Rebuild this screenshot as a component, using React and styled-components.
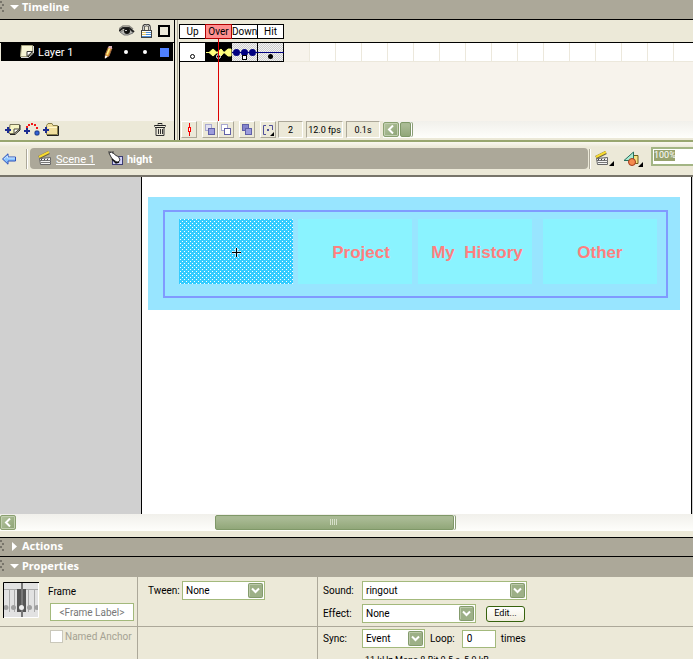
import styled, { createGlobalStyle } from "styled-components"

const GlobalStyle = createGlobalStyle`
  * {
    box-sizing: border-box;
  }

  body {
    margin: 0;
    overflow: hidden;
    background: #ece9d8;
    color: #000;
    font-family: Roboto, "Liberation Sans", sans-serif;
    font-size: 10px;
    line-height: 12px;
  }

  button, input, select {
    font: inherit;
    color: inherit;
    margin: 0;
    padding: 0;
    border-radius: 0;
  }

  svg {
    display: block;
    flex: none;
  }
`

const Page = styled.div`
  display: flex;
  flex-direction: column;
  height: 100vh;
`

/* Panel title bars */

const TitleBar = styled.header`
  display: flex;
  align-items: center;
  flex: none;
  height: ${({ $height }) => $height}px;
  padding-bottom: ${({ $raised }) => ($raised ? 5 : 2)}px;
  background: #aca899;
  border-top: ${({ $ruled }) => ($ruled ? "1px solid #000" : "none")};
  color: #fff;

  h2 {
    margin: 0 0 0 3px;
    font-family: "Noto Sans", sans-serif;
    font-size: 11px;
    font-weight: 700;
    line-height: 14px;
  }
`

const Triangle = ({ open }) => (
  <svg width="19" height="14" viewBox="0 0 19 14">
    <g fill="#77746a">
      <rect x="0" y="1" width="2" height="2" />
      <rect x="2" y="4" width="2" height="2" />
      <rect x="0" y="7" width="2" height="2" />
      <rect x="2" y="10" width="2" height="2" />
    </g>
    <path d={open ? "M10 5h9l-4.500 4.500z" : "M12 3v9l5-4.500z"} fill="#fff" />
  </svg>
)

const PanelTitle = ({ title, open, ...bar }) => (
  <TitleBar {...bar}>
    <Triangle open={open} />
    <h2>{title}</h2>
  </TitleBar>
)

/* Timeline */

const Timeline = styled.section`
  display: grid;
  grid-template-columns: 175px 1fr;
  column-gap: 4px;
  flex: none;
  height: 121px;
  border-top: 1px solid #000;
  background: linear-gradient(90deg, transparent 177px, #aca899 177px, #aca899 178px, transparent 178px);
`

const Column = styled.div`
  position: relative;
  display: flex;
  flex-direction: column;
  min-width: 0;
  border: 0 solid #000;
  border-width: ${({ $frames }) => ($frames ? "0 0 0 1px" : "0 1px 0 0")};
`

const ColumnHead = styled.div`
  display: flex;
  align-items: center;
  flex: none;
  height: 23px;
  border-bottom: 1px solid #000;
  background: #ece9d8;
`

const LayerHead = styled(ColumnHead)`
  justify-content: flex-end;
  gap: 6px;
  padding-right: 4px;
`

const Empty = styled.div`
  flex: 1;
  background: #f7f3ec;
`

const LayerRow = styled.div`
  display: flex;
  align-items: center;
  flex: none;
  height: 18px;
  margin: 0 1px;
  padding: 0 4px 0 19px;
  background: #000;
  color: #fff;
  font-size: 11px;

  span {
    flex: 1;
    padding: 2px 0 0 4px;
  }
`

const Dot = styled.i`
  width: 4px;
  height: 4px;
  margin-left: ${({ $gap }) => $gap}px;
  border-radius: 2px;
  background: #fff;
`

const Swatch = styled.i`
  width: 9px;
  height: 9px;
  margin-left: 13px;
  background: #4f80ff;
`

const Footer = styled.div`
  display: flex;
  align-items: center;
  flex: none;
  height: 19px;
  background: #ece9d8;
`

const LayerTools = styled(Footer)`
  gap: 3px;
  padding: 0 8px 2px 5px;
`

const IconButton = styled.button`
  display: flex;
  align-items: center;
  border: 0;
  background: none;

  &:last-child {
    margin-left: ${({ $end }) => ($end ? "auto" : "0")};
  }
`

const FrameHead = styled(ColumnHead)`
  align-items: flex-start;
  padding-top: 4px;
  margin-left: -1px;
`

const FrameName = styled.div`
  width: 27px;
  height: 15px;
  margin-right: -1px;
  border: 1px solid ${({ $active }) => ($active ? "#b00000" : "#000")};
  position: relative;
  z-index: ${({ $active }) => ($active ? 1 : 0)};
  background: ${({ $active }) => ($active ? "#ff9090" : "#fff")};
  line-height: 13px;
  text-align: center;
  white-space: nowrap;
`

const FrameRow = styled.div`
  display: flex;
  flex: none;
  height: 19px;
  background: #fff;
  overflow: hidden;
`

const FrameCell = styled.div`
  flex: none;
  width: 26px;
  border: 1px solid #ece8dc;
  border-width: 0 1px 1px 0;
  background: ${({ $shaded }) => ($shaded ? "#f7f3ec" : "#fff")};
`

const Playhead = styled.div`
  position: absolute;
  left: 38px;
  top: 18px;
  bottom: 19px;
  width: 1px;
  background: #d00;
`

const StatusBar = styled(Footer)`
  padding: 0 0 2px 1px;
`

const ToolButton = styled.button`
  display: grid;
  place-items: center;
  width: 16px;
  height: 17px;
  margin-right: ${({ $gap }) => $gap || 0}px;
  border: 1px solid;
  border-color: #fff #aca899 #aca899 #fff;
  background: #ece9d8;
`

const Status = styled.output`
  height: 17px;
  width: ${({ $width }) => $width}px;
  margin-right: 3px;
  border: 1px solid;
  border-color: #aca899 #fff #fff #aca899;
  font-size: 9px;
  line-height: 16px;
  text-align: center;
  white-space: nowrap;
`

/* Scroll bars */

const Track = styled.div`
  display: flex;
  align-items: center;
  flex: ${({ $grow }) => ($grow ? 1 : "none")};
  height: 17px;
  padding-right: 1px;
  background: linear-gradient(#f1f0eb, #fefefb);
`

const ScrollButton = styled.button`
  display: grid;
  place-items: center;
  width: 16px;
  height: 15px;
  border: 1px solid #8aa070;
  border-radius: 2px;
  background: linear-gradient(135deg, #b5c5a0, #8ca273);
  box-shadow: inset 0 0 0 1px #c2cfb0;
`

const Thumb = styled.div`
  display: grid;
  place-items: center;
  width: ${({ $width }) => $width};
  height: 15px;
  margin-left: ${({ $offset }) => $offset};
  border: 1px solid #7f9868;
  border-radius: 2px;
  background: linear-gradient(#a9ba94 20%, #91a779);
  box-shadow: 1px 0 0 #fff, 2px 0 0 #8b9d78;
`

/* Edit bar */

const EditBar = styled.nav`
  display: flex;
  align-items: center;
  flex: none;
  height: 37px;
  padding-left: 2px;
  border-top: 2px solid #98a66f;
  border-bottom: 2px solid #77746a;
  background: linear-gradient(#faf8f0, #ece9d8 5px);
`

const Divider = styled.i`
  width: 2px;
  height: 20px;
  margin: ${({ $tight }) => ($tight ? "0 4px 0 0" : "0 2px 0 10px")};
  border-left: 1px solid #aca899;
  border-right: 1px solid #fff;
`

const Crumbs = styled.div`
  display: flex;
  align-items: center;
  flex: 1;
  height: 21px;
  padding-left: 8px;
  border-radius: 4px;
  background: #aca899;
  color: #fff;
  font-size: 11px;

  a, strong {
    padding-top: 2px;
  }

  a {
    margin: 0 13px 0 4px;
    color: inherit;
  }

  strong {
    margin-left: 3px;
  }
`

const EditTools = styled.div`
  display: flex;
  align-items: center;
  width: 105px;
  gap: 8px;
  padding-left: 1px;
`

const ZoomBox = styled.input`
  flex: 1;
  min-width: 0;
  height: 19px;
  margin-top: -5px;
  padding: 0 0 3px 1px;
  border: 2px solid #a3b584;
  border-right: 0;
  background: linear-gradient(#98a36f, #98a36f) 1px 1px / 21px 11px no-repeat #fff;
  color: #fff;
  font-size: 9px;
  line-height: 12px;
`

/* Stage */

const Stage = styled.main`
  display: flex;
  flex: 1;
  min-height: 0;
  padding-left: 141px;
  background: #d0d0d0;
`

const Artboard = styled.div`
  flex: 1;
  margin-right: 1px;
  padding: 20px 11px 0 6px;
  border: 0 solid #000;
  border-width: 0 1px;
  background: #fff;
`

const Banner = styled.div`
  padding: 13px 12px 12px 15px;
  background: #98e5ff;
`

const Menu = styled.div`
  display: grid;
  grid-template-columns: 119fr 120fr 125fr 114fr;
  height: 88px;
  padding: 7px 9px 0 14px;
  border: 2px solid #809aff;
`

const Tile = styled.div`
  display: grid;
  place-items: center;
  width: 114px;
  height: 65px;
  padding: ${({ $inset }) => `3px 0 0 ${$inset || 0}px`};
  background: #8af3ff;
  color: #ff7f7f;
  font-family: "Liberation Sans", Arial, sans-serif;
  font-size: 17px;
  font-weight: 700;
  line-height: 20px;
  white-space: pre;
`

const SelectedTile = styled(Tile)`
  padding: 2px 0 0;
  background:
    conic-gradient(from 270deg at 1px 1px, #fff 90deg, transparent 0) 1px 0 / 4px 4px,
    conic-gradient(from 270deg at 1px 1px, #fff 90deg, transparent 0) 3px 2px / 4px 4px,
    #33ccff;
`

const ScrollRow = styled.div`
  flex: none;
  height: 23px;
  border-bottom: 6px solid #ece9d8;
`

/* Properties */

const Properties = styled.section`
  display: grid;
  grid-template-columns: 138px 180px 1fr;
  grid-template-rows: 50px 32px;
  flex: none;
  overflow: hidden;
`

const Cell = styled.div`
  padding: ${({ $pad }) => $pad || "4px 0 0 5px"};
  border: 0 solid #aca899;
  border-right-width: ${({ $last }) => ($last ? 0 : 1)}px;
  border-bottom-width: ${({ $top }) => ($top ? 1 : 0)}px;
`

const Row = styled.div`
  display: flex;
  align-items: center;
  gap: ${({ $gap }) => $gap || 0}px;
  height: 19px;
  margin-bottom: ${({ $space }) => $space || 0}px;
`

const Label = styled.label`
  width: ${({ $width }) => ($width ? `${$width}px` : "auto")};
  white-space: nowrap;
`

const FrameInfo = styled.div`
  display: flex;
  gap: 9px;

  svg {
    margin-top: 1px;
  }
`

const FrameFields = styled.div`
  display: flex;
  flex-direction: column;
  gap: 5px;
  padding-top: 5px;
`

const TextBox = styled.input`
  width: ${({ $width }) => $width}px;
  height: 18px;
  margin-left: 2px;
  padding: 0 4px;
  border: 1px solid #a3b97c;
  background: #fff;

  &::placeholder {
    color: #777;
    opacity: 1;
    text-align: center;
  }
`

const Checkbox = styled.input`
  appearance: none;
  width: 13px;
  height: 13px;
  border: 1px solid #cac8bb;
  background: #fff;
`

const MutedLabel = styled(Label)`
  color: #a5a293;
`

const SelectBox = styled.div`
  position: relative;
  width: ${({ $width }) => $width}px;

  select {
    appearance: none;
    display: block;
    width: 100%;
    height: 19px;
    padding-left: 3px;
    border: 1px solid #a3b97c;
    background: #fff;
  }

  svg {
    position: absolute;
    right: 2px;
    top: 2px;
    pointer-events: none;
  }
`

const EditButton = styled.button`
  width: 39px;
  height: 16px;
  margin-left: 10px;
  border: 1px solid #37620e;
  border-radius: 3px;
  background: linear-gradient(#fff, #f1eddd);
  font-size: 9px;
  line-height: 13px;
`

const SoundInfo = styled.p`
  margin: 6px 0 0 42px;
  font-size: 9px;
  white-space: nowrap;
`

const Select = ({ id, value, width }) => (
  <SelectBox $width={width}>
    <select id={id} defaultValue={value}>
      <option>{value}</option>
    </select>
    <svg width="15" height="15" viewBox="0 0 15 15">
      <rect x=".5" y=".5" width="14" height="14" rx="1" fill="#9db087" stroke="#849b6d" />
      <path d="M1.500 13V1.500H13" fill="none" stroke="#bccaa9" />
      <path d="M4 5.500l3.500 3.500L11 5.500" fill="none" stroke="#fff" strokeWidth="2" />
    </svg>
  </SelectBox>
)

/* Icons */

const EyeIcon = () => (
  <svg width="16" height="12" viewBox="0 0 16 12">
    <path d="M0 4l4-3h6l4 3" fill="none" stroke="#8a8880" strokeWidth="1.500" />
    <path d="M0 6l4-3h6l5 4" fill="none" stroke="#222" strokeWidth="2" />
    <path d="M1 7l4-2h6l3 3-5 2H5z" fill="#b8b8b4" stroke="#777" />
    <circle cx="8" cy="6" r="3" fill="#111" />
    <rect x="6" y="5" width="2" height="1" fill="#ccc" />
  </svg>
)

const LockIcon = () => (
  <svg width="11" height="14" viewBox="0 0 11 14">
    <path d="M2.500 7V3q0-2 3-2t3 2v4" fill="none" stroke="#333" strokeWidth="2.500" />
    <path d="M2.500 7V3q0-1.800 3-1.800t3 1.800v4" fill="none" stroke="#ccc" />
    <rect x=".5" y="6.500" width="10" height="7" fill="#fff" stroke="#444" />
    <path d="M1 8.500h4M1 10.500h4" stroke="#e8c86a" />
    <path d="M5 8.500h5M5 10.500h5M1 12.500h9" stroke="#4d8fd8" />
  </svg>
)

const OutlineIcon = () => (
  <svg width="12" height="12" viewBox="0 0 12 12">
    <rect x="1" y="1" width="10" height="10" fill="none" stroke="#000" strokeWidth="2" />
  </svg>
)

const SheetIcon = () => (
  <svg width="14" height="14" viewBox="0 0 14 14">
    <path d="M1.500 .5h11v7l-5 4h-7z" fill="#f6f4d4" stroke="#a5a27e" />
    <path d="M7 11.500V6.500h5.500z" fill="#fff" stroke="#333" />
    <path d="M13.500 1v7l-5 4.500H1" fill="none" stroke="#ddd" />
  </svg>
)

const PencilIcon = () => (
  <svg width="9" height="13" viewBox="0 0 9 13">
    <path d="M1 12l.5-4 3-7 3.500 1-3 8z" fill="#e8a23b" stroke="#9a6440" />
    <path d="M4.800 0h3.200v3l-3.800-1z" fill="#dcb0ba" />
    <path d="M3 8.500l2.500-6" stroke="#fff38a" strokeWidth="1.500" />
    <path d="M.8 12.800l.5-3.300 2.500 1z" fill="#fff" />
  </svg>
)

const Plus = () => <path d="M0 7h6M3 4v6" stroke="#1c2c90" strokeWidth="2" />

const AddLayerIcon = () => (
  <svg width="16" height="13" viewBox="0 0 16 13">
    <path d="M5 1.500h9.500V6l-5 4.500H4z" fill="#f6f4c4" stroke="#77745a" />
    <path d="M9 10.500V6h5.500z" fill="#fff" stroke="#4c4a3c" />
    <path d="M15 2v5l-5 4.500H5" fill="none" stroke="#222" />
    <Plus />
  </svg>
)

const AddGuideIcon = () => (
  <svg width="16" height="13" viewBox="0 0 16 13">
    <g fill="#f01818">
      <rect x="2" y="3" width="2" height="2" />
      <rect x="4" y="1" width="2" height="2" />
      <rect x="7" y="0" width="2" height="2" />
      <rect x="10" y="1" width="2" height="2" />
      <rect x="12" y="4" width="2" height="2" />
    </g>
    <rect x="11" y="8" width="4" height="4" rx="1" fill="#3463d5" stroke="#173785" />
    <path d="M0 8h6M3 5v6" stroke="#1c2c90" strokeWidth="2" />
  </svg>
)

const AddFolderIcon = () => (
  <svg width="16" height="13" viewBox="0 0 16 13">
    <path d="M3.500 11.500v-9l1.500-2h4l1 2h4.500v9z" fill="#f1df9e" stroke="#88804d" />
    <path d="M5 4.500h9" stroke="#fff7c8" />
    <path d="M15.500 3v9.500H4" fill="none" stroke="#222" />
    <Plus />
  </svg>
)

const TrashIcon = () => (
  <svg width="12" height="13" viewBox="0 0 12 13">
    <path d="M4 1.500V.5h4v1M.5 3.500v-1h11v1M1 4.500h10" stroke="#222" fill="none" />
    <path d="M2 4v8.500h8V4M4.500 6v5M6.500 6v5M8.500 6v5" stroke="#333" fill="none" />
  </svg>
)

const FrameStrip = () => (
  <svg width="104" height="19" viewBox="0 0 104 19">
    <defs>
      <pattern id="hatch" width="2" height="2" patternUnits="userSpaceOnUse">
        <rect width="2" height="2" fill="#f2f2f2" />
        <path d="M0 0h1v1H0zM1 1h1v1H1z" fill="#cdcdcd" />
      </pattern>
    </defs>
    <rect width="25" height="18" fill="#fff" />
    <rect x="25" width="27" height="18" fill="#000" />
    <rect x="52" width="52" height="18" fill="url(#hatch)" />
    <path d="M77.500 0v18M103.500 0v19M0 18.500h104" stroke="#000" />
    <circle cx="12.500" cy="13.500" r="2" fill="#fff" stroke="#000" />
    <path d="M26 9.500h25" stroke="#ffff80" />
    <path d="M29 9.500l4-3.500 4 3.500-4 3.500zM37 9.500L41 6l3 3.500-3 3.500zM44 9.500L48 6h3v7h-3z" fill="#ffff7c" stroke="#ffff7c" />
    <circle cx="38.500" cy="13.500" r="2" fill="#000" stroke="#fff" />
    <path d="M52 9.500h52" stroke="#000080" />
    <circle cx="56.500" cy="9.500" r="3.500" fill="#000080" />
    <circle cx="64.500" cy="9.500" r="3.500" fill="#000080" />
    <circle cx="72.500" cy="9.500" r="3.500" fill="#000080" />
    <rect x="62.500" y="12.500" width="4" height="4" fill="#fff" stroke="#000" />
    <circle cx="90.500" cy="13.500" r="2.500" fill="#000" />
  </svg>
)

const CenterIcon = () => (
  <svg width="7" height="13" viewBox="0 0 7 13">
    <path d="M3.500 0v4M3.500 9v4" stroke="#e00" />
    <rect x="2.500" y="4.500" width="2" height="4" fill="#fff" stroke="#f00" />
  </svg>
)

const OnionIcon = ({ back, front, edge }) => (
  <svg width="12" height="12" viewBox="0 0 12 12">
    <rect x="1.500" y=".5" width="6" height="6" fill={back} stroke={edge} />
    <rect x="4.500" y="4.500" width="6" height="6" fill={front} stroke="#6060a8" />
  </svg>
)

const MarkersIcon = () => (
  <svg width="12" height="12" viewBox="0 0 12 12">
    <path d="M4 1.500H1.500v9H4M7 1.500h3.500V6" fill="none" stroke="#50509a" />
    <rect x="5" y="5" width="2" height="2" fill="#50509a" />
    <path d="M12 8v4H8z" fill="#000" />
  </svg>
)

const ChevronLeft = () => (
  <svg width="8" height="9" viewBox="0 0 8 9">
    <path d="M6 .5l-4 4 4 4" fill="none" stroke="#fff" strokeWidth="2" />
  </svg>
)

const Grip = () => (
  <svg width="8" height="7" viewBox="0 0 8 7">
    <path d="M.5 0v6M2.500 0v6M4.500 0v6M6.500 0v6" stroke="#d6dfc9" />
  </svg>
)

const BackArrow = () => (
  <svg width="14" height="12" viewBox="0 0 14 12">
    <path d="M.5 6L6 .8V4h7.500v4H6v3.200z" fill="#8ac4ff" stroke="#2c50b8" />
    <path d="M2 6l3.500-3v2H13" fill="none" stroke="#c8e4ff" />
  </svg>
)

const SceneIcon = ({ menu }) => (
  <svg width={menu ? 20 : 14} height="15" viewBox={menu ? "0 0 20 15" : "0 0 14 15"}>
    <path d="M1 6.500L11 1.500" stroke="#6c6342" strokeWidth="3.500" />
    <path d="M1 6L11 1" stroke="#f8dc30" strokeWidth="2" />
    <path d="M1.500 7.500L12.500 6.500v7h-10z" fill="#f4f4f4" stroke="#666" />
    <path d="M2 9.500h11M3 11.500h10" stroke="#777" />
    <path d="M4 7.500l-1 2M7 7.500l-1 2M10 7.500l-1 2" stroke="#444" />
    {menu && <path d="M19 10v5h-5z" fill="#000" />}
  </svg>
)

const ButtonIcon = () => (
  <svg width="16" height="15" viewBox="0 0 16 15">
    <rect x="4.500" y="5.500" width="10" height="8" fill="#d0d0f6" stroke="#3c3c73" />
    <path d="M1 2l3-1 4 3.500q3 0 4 4.500l-2 2.500-5-2.500-2-3z" fill="#fff" stroke="#333" />
    <path d="M4 8l4 4 3-1" fill="none" stroke="#111" strokeWidth="1.500" />
    <path d="M0 1h3M5 0v3" stroke="#444" />
  </svg>
)

const SymbolsIcon = () => (
  <svg width="20" height="16" viewBox="0 0 20 16">
    <path d="M7 4.500h8v8H8z" fill="#f5e383" stroke="#72601d" />
    <path d="M1 9.500L10.500 1v8.500z" fill="#a8ead1" stroke="#27705e" />
    <circle cx="9" cy="11" r="3.500" fill="#f58b50" stroke="#a03b1d" />
    <path d="M20 11v5h-5z" fill="#000" />
  </svg>
)

const Crosshair = () => (
  <svg width="9" height="9" viewBox="0 0 9 9">
    <path d="M0 4.500h9M4.500 0v9" stroke="#fff" strokeWidth="3" opacity=".6" />
    <path d="M0 4.500h9M4.500 0v9" stroke="#000" />
  </svg>
)

const FrameThumb = () => (
  <svg width="36" height="36" viewBox="0 0 36 36">
    <rect width="36" height="36" fill="#e2e2e2" />
    <path d="M0 7.500h36M6.500 8v22M11.500 8v22M25.500 8v22M31.500 8v22" stroke="#aaa" />
    <rect x="14" y="7" width="9" height="23" fill="#555" />
    <path d="M19 1v35" stroke="#777" strokeWidth="2" />
    <g fill="#a0a0a0">
      <circle cx="3" cy="25.500" r="2.500" />
      <circle cx="10.500" cy="25.500" r="2.500" />
      <circle cx="26.500" cy="25.500" r="2.500" />
      <circle cx="34" cy="25.500" r="2.500" />
    </g>
    <circle cx="18.500" cy="25.500" r="2.500" fill="#eee" />
    <path d="M.5 36V.5H36" fill="none" stroke="#000" />
    <path d="M1 35.500h34.500V1" fill="none" stroke="#fff" />
  </svg>
)

const frames = ["Up", "Over", "Down", "Hit"]
const emptyCells = Array.from({ length: 60 }, (_, i) => i)

const LayersColumn = () => (
  <Column>
    <LayerHead>
      <EyeIcon />
      <LockIcon />
      <OutlineIcon />
    </LayerHead>
    <LayerRow>
      <SheetIcon />
      <span>Layer 1</span>
      <PencilIcon />
      <Dot $gap={11} />
      <Dot $gap={15} />
      <Swatch />
    </LayerRow>
    <Empty />
    <LayerTools>
      <IconButton aria-label="Insert layer"><AddLayerIcon /></IconButton>
      <IconButton aria-label="Add motion guide"><AddGuideIcon /></IconButton>
      <IconButton aria-label="Insert folder"><AddFolderIcon /></IconButton>
      <IconButton aria-label="Delete layer" $end><TrashIcon /></IconButton>
    </LayerTools>
  </Column>
)

const FramesColumn = () => (
  <Column $frames>
    <FrameHead>
      {frames.map((name) => (
        <FrameName key={name} $active={name === "Over"}>{name}</FrameName>
      ))}
    </FrameHead>
    <FrameRow>
      <FrameStrip />
      {emptyCells.map((i) => <FrameCell key={i} $shaded={i === 0} />)}
    </FrameRow>
    <Empty />
    <StatusBar>
      <ToolButton $gap={5} aria-label="Center frame"><CenterIcon /></ToolButton>
      <ToolButton aria-label="Onion skin"><OnionIcon back="#e2e2f0" front="#9c9cdc" edge="#a8a8d0" /></ToolButton>
      <ToolButton $gap={5} aria-label="Onion skin outlines"><OnionIcon back="#fff" front="#fff" edge="#a8a8d0" /></ToolButton>
      <ToolButton $gap={5} aria-label="Edit multiple frames"><OnionIcon back="#8585cc" front="#9c9cdc" edge="#6060a8" /></ToolButton>
      <ToolButton $gap={2} aria-label="Modify onion markers"><MarkersIcon /></ToolButton>
      <Status $width={25}>2</Status>
      <Status $width={37}>12.0 fps</Status>
      <Status $width={34}>0.1s</Status>
      <Track $grow>
        <ScrollButton aria-label="Scroll left"><ChevronLeft /></ScrollButton>
        <Thumb $width="11px" $offset="1px" />
      </Track>
    </StatusBar>
    <Playhead />
  </Column>
)

const PropertiesPanel = () => (
  <Properties>
    <Cell $top $pad="4px 0 0 3px">
      <FrameInfo>
        <FrameThumb />
        <FrameFields>
          <Label htmlFor="frame-label">Frame</Label>
          <TextBox id="frame-label" $width={84} placeholder="<Frame Label>" />
        </FrameFields>
      </FrameInfo>
    </Cell>
    <Cell $top $pad="4px 0 0 10px">
      <Row>
        <Label htmlFor="tween" $width={34}>Tween:</Label>
        <Select id="tween" value="None" width={83} />
      </Row>
    </Cell>
    <Cell $top $last>
      <Row $space={4}>
        <Label htmlFor="sound" $width={39}>Sound:</Label>
        <Select id="sound" value="ringout" width={165} />
      </Row>
      <Row>
        <Label htmlFor="effect" $width={39}>Effect:</Label>
        <Select id="effect" value="None" width={114} />
        <EditButton>Edit...</EditButton>
      </Row>
    </Cell>
    <Cell $pad="0 0 0 50px">
      <Row $gap={2}>
        <Checkbox type="checkbox" id="anchor" disabled />
        <MutedLabel htmlFor="anchor">Named Anchor</MutedLabel>
      </Row>
    </Cell>
    <Cell />
    <Cell $last $pad="2px 0 0 5px">
      <Row>
        <Label htmlFor="sync" $width={39}>Sync:</Label>
        <Select id="sync" value="Event" width={63} />
        <Row as="span" $gap={5}>
          <Label htmlFor="loop">&nbsp; Loop:</Label>
          <TextBox id="loop" $width={34} defaultValue="0" />
          <span>times</span>
        </Row>
      </Row>
      <SoundInfo>11 kHz Mono 8 Bit 0.5 s, 5.9 kB</SoundInfo>
    </Cell>
  </Properties>
)

const App = () => {
  return (
    <>
      <GlobalStyle />

      <Page>
        <PanelTitle title="Timeline" open $height={19} $raised />
        <Timeline>
          <LayersColumn />
          <FramesColumn />
        </Timeline>

        <EditBar>
          <IconButton aria-label="Back"><BackArrow /></IconButton>
          <Divider />
          <Crumbs>
            <SceneIcon />
            <a href="#scene-1">Scene 1</a>
            <ButtonIcon />
            <strong>hight</strong>
          </Crumbs>
          <EditTools>
            <IconButton as="span"><Divider $tight /><SceneIcon menu /></IconButton>
            <IconButton aria-label="Edit symbols"><SymbolsIcon /></IconButton>
            <ZoomBox aria-label="Zoom" defaultValue="100%" />
          </EditTools>
        </EditBar>

        <Stage>
          <Artboard>
            <Banner>
              <Menu>
                <SelectedTile><Crosshair /></SelectedTile>
                <Tile $inset={12}>Project</Tile>
                <Tile $inset={4}>My  History</Tile>
                <Tile>Other</Tile>
              </Menu>
            </Banner>
          </Artboard>
        </Stage>
        <ScrollRow>
          <Track>
            <ScrollButton aria-label="Scroll left"><ChevronLeft /></ScrollButton>
            <Thumb $width="calc(35% - 3px)" $offset="calc(29% - 2px)"><Grip /></Thumb>
          </Track>
        </ScrollRow>

        <PanelTitle title="Actions" $height={19} $ruled />
        <PanelTitle title="Properties" open $height={21} $ruled />
        <PropertiesPanel />
      </Page>
    </>
  );
}

export default App
